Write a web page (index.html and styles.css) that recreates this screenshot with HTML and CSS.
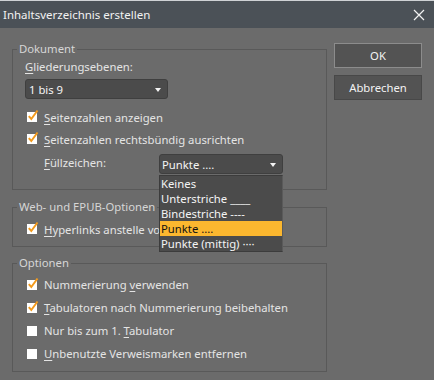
FILE: index.html
```html
<!DOCTYPE html>
<html lang="de">
<head>
<meta charset="utf-8">
<title>Inhaltsverzeichnis erstellen</title>
<link rel="stylesheet" href="styles.css">
</head>
<body>
<div class="window">
  <div class="titlebar">
    <span class="title">Inhaltsverzeichnis erstellen</span>
    <svg class="close" width="12" height="12" viewBox="0 0 12 12"><path d="M1 1 L11 11 M11 1 L1 11" stroke="#f2f2f2" stroke-width="1.2" fill="none"/></svg>
  </div>
  <div class="body">
    <div class="groups">
      <fieldset class="group g-doc">
        <legend>Dokument</legend>
        <div class="label"><u>G</u>liederungsebenen:</div>
        <div class="select sel-levels"><span>1 bis 9</span><i class="arrow"></i></div>
        <div class="check first">
          <svg class="box" width="12" height="13" viewBox="0 0 12 13"><rect x="0" y="3" width="10" height="10" fill="#fff"/><path d="M1.8 7.2 L4.3 10 L10.5 1.5" stroke="#f39a1c" stroke-width="2" fill="none"/></svg>
          <span><u>S</u>eitenzahlen anzeigen</span>
        </div>
        <div class="check">
          <svg class="box" width="12" height="13" viewBox="0 0 12 13"><rect x="0" y="3" width="10" height="10" fill="#fff"/><path d="M1.8 7.2 L4.3 10 L10.5 1.5" stroke="#f39a1c" stroke-width="2" fill="none"/></svg>
          <span><u>S</u>eitenzahlen rechtsbündig ausrichten</span>
        </div>
        <div class="fill-row">
          <span class="fill-label"><u>F</u>üllzeichen:</span>
          <div class="select sel-fill"><span>Punkte ....</span><i class="arrow"></i>
            <ul class="dropdown">
              <li>Keines</li>
              <li>Unterstriche ____</li>
              <li>Bindestriche ----</li>
              <li class="active">Punkte ....</li>
              <li>Punkte (mittig) ····</li>
            </ul>
          </div>
        </div>
      </fieldset>
      <fieldset class="group g-web">
        <legend>Web- und EPUB-Optionen</legend>
        <div class="check first">
          <svg class="box" width="12" height="13" viewBox="0 0 12 13"><rect x="0" y="3" width="10" height="10" fill="#fff"/><path d="M1.8 7.2 L4.3 10 L10.5 1.5" stroke="#f39a1c" stroke-width="2" fill="none"/></svg>
          <span><u>H</u>yperlinks anstelle von Seitenzahlen</span>
        </div>
      </fieldset>
      <fieldset class="group g-opt">
        <legend>Optionen</legend>
        <div class="check first">
          <svg class="box" width="12" height="13" viewBox="0 0 12 13"><rect x="0" y="3" width="10" height="10" fill="#fff"/><path d="M1.8 7.2 L4.3 10 L10.5 1.5" stroke="#f39a1c" stroke-width="2" fill="none"/></svg>
          <span>Nummerierung <u>v</u>erwenden</span>
        </div>
        <div class="check">
          <svg class="box" width="12" height="13" viewBox="0 0 12 13"><rect x="0" y="3" width="10" height="10" fill="#fff"/><path d="M1.8 7.2 L4.3 10 L10.5 1.5" stroke="#f39a1c" stroke-width="2" fill="none"/></svg>
          <span><u>T</u>abulatoren nach Nummerierung beibehalten</span>
        </div>
        <div class="check">
          <svg class="box" width="12" height="13" viewBox="0 0 12 13"><rect x="0" y="3" width="10" height="10" fill="#fff"/></svg>
          <span>Nur bis zum 1. <u>T</u>abulator</span>
        </div>
        <div class="check">
          <svg class="box" width="12" height="13" viewBox="0 0 12 13"><rect x="0" y="3" width="10" height="10" fill="#fff"/></svg>
          <span><u>U</u>nbenutzte Verweismarken entfernen</span>
        </div>
      </fieldset>
    </div>
    <div class="buttons">
      <div class="btn btn-default">OK</div>
      <div class="btn">Abbrechen</div>
    </div>
  </div>
</div>
</body>
</html>
```
FILE: styles.css
```css
* { box-sizing: border-box; }
html, body { margin: 0; padding: 0; }
body {
  width: 434px;
  height: 380px;
  background: #6b6b6b;
  font-family: "Noto Sans", "Open Sans", sans-serif;
  font-size: 11.3px;
  color: #e4e4e4;
  overflow: hidden;
}
.window {
  width: 434px;
  height: 380px;
  border-top: 1px solid #cfd2d5;
}
.titlebar {
  height: 27px;
  background: #4b5157;
  display: flex;
  align-items: center;
  justify-content: space-between;
  padding: 0 9px 0 3px;
}
.title {
  color: #f2f2f2;
  font-size: 11.5px;
}
.close { display: block; }
.body {
  display: flex;
  padding: 13px 0 0 12px;
  gap: 7px;
}
.groups {
  width: 315px;
  display: flex;
  flex-direction: column;
}
.group {
  margin: 0;
  padding: 0 12px;
  border: 1px solid #595959;
  min-inline-size: 0;
}
.group legend {
  padding: 0 2px;
  margin-left: -8px;
  line-height: 16px;
  height: 16px;
  color: #d6d6d6;
}
.g-doc { padding-bottom: 15px; }
.g-web { margin-top: 9px; padding-bottom: 6px; }
.g-opt { margin-top: 8px; padding-bottom: 6px; }
.label {
  margin-top: 2px;
  height: 16px;
  line-height: 16px;
}
.select {
  position: relative;
  height: 20px;
  background: #4b4b4b;
  border: 1px solid #3f3f3f;
  border-radius: 3px;
  display: flex;
  align-items: center;
  color: #f4f4f4;
}
.sel-levels {
  margin-top: 4px;
  width: 143px;
  padding-left: 3px;
}
.arrow {
  position: absolute;
  top: 8px;
  right: 6px;
  width: 0;
  height: 0;
  border-left: 3.5px solid transparent;
  border-right: 3.5px solid transparent;
  border-top: 4px solid #f4f4f4;
}
.check {
  height: 22px;
  display: flex;
  align-items: center;
  padding-left: 2px;
  gap: 5px;
}
.check .box { display: block; flex: none; margin-top: -3px; }
.g-doc .check.first { margin-top: 7px; }
.g-web .check.first { margin-top: 3px; }
.g-opt .check { height: 23px; }
.g-opt .check.first { margin-top: 2px; }
.fill-row {
  margin-top: 4px;
  height: 20px;
  display: flex;
  align-items: center;
  padding-left: 19px;
}
.fill-label {
  width: 115px;
  flex: none;
  margin-top: -3px;
}
.sel-fill {
  width: 124px;
  padding-left: 2px;
}
.dropdown {
  position: absolute;
  left: -1px;
  top: 20px;
  width: 124px;
  margin: 0;
  padding: 0;
  list-style: none;
  background: #4b4b4b;
  border: 1px solid #3c3c3c;
  border-right-color: #5a5a5a;
  z-index: 5;
}
.dropdown li {
  height: 15px;
  line-height: 15px;
  padding-left: 1px;
  color: #f4f4f4;
  white-space: nowrap;
}
.dropdown li.active {
  background: #fbb72f;
  color: #111;
}
.buttons {
  display: flex;
  flex-direction: column;
  gap: 7px;
  padding-top: 2px;
}
.btn {
  width: 88px;
  height: 25px;
  background: #535353;
  border: 1px solid #484848;
  display: flex;
  align-items: center;
  justify-content: center;
  color: #f2f2f2;
}
.btn-default { border-color: #8c8c8c; }
u { text-decoration: underline; text-underline-offset: 2px; }
```
